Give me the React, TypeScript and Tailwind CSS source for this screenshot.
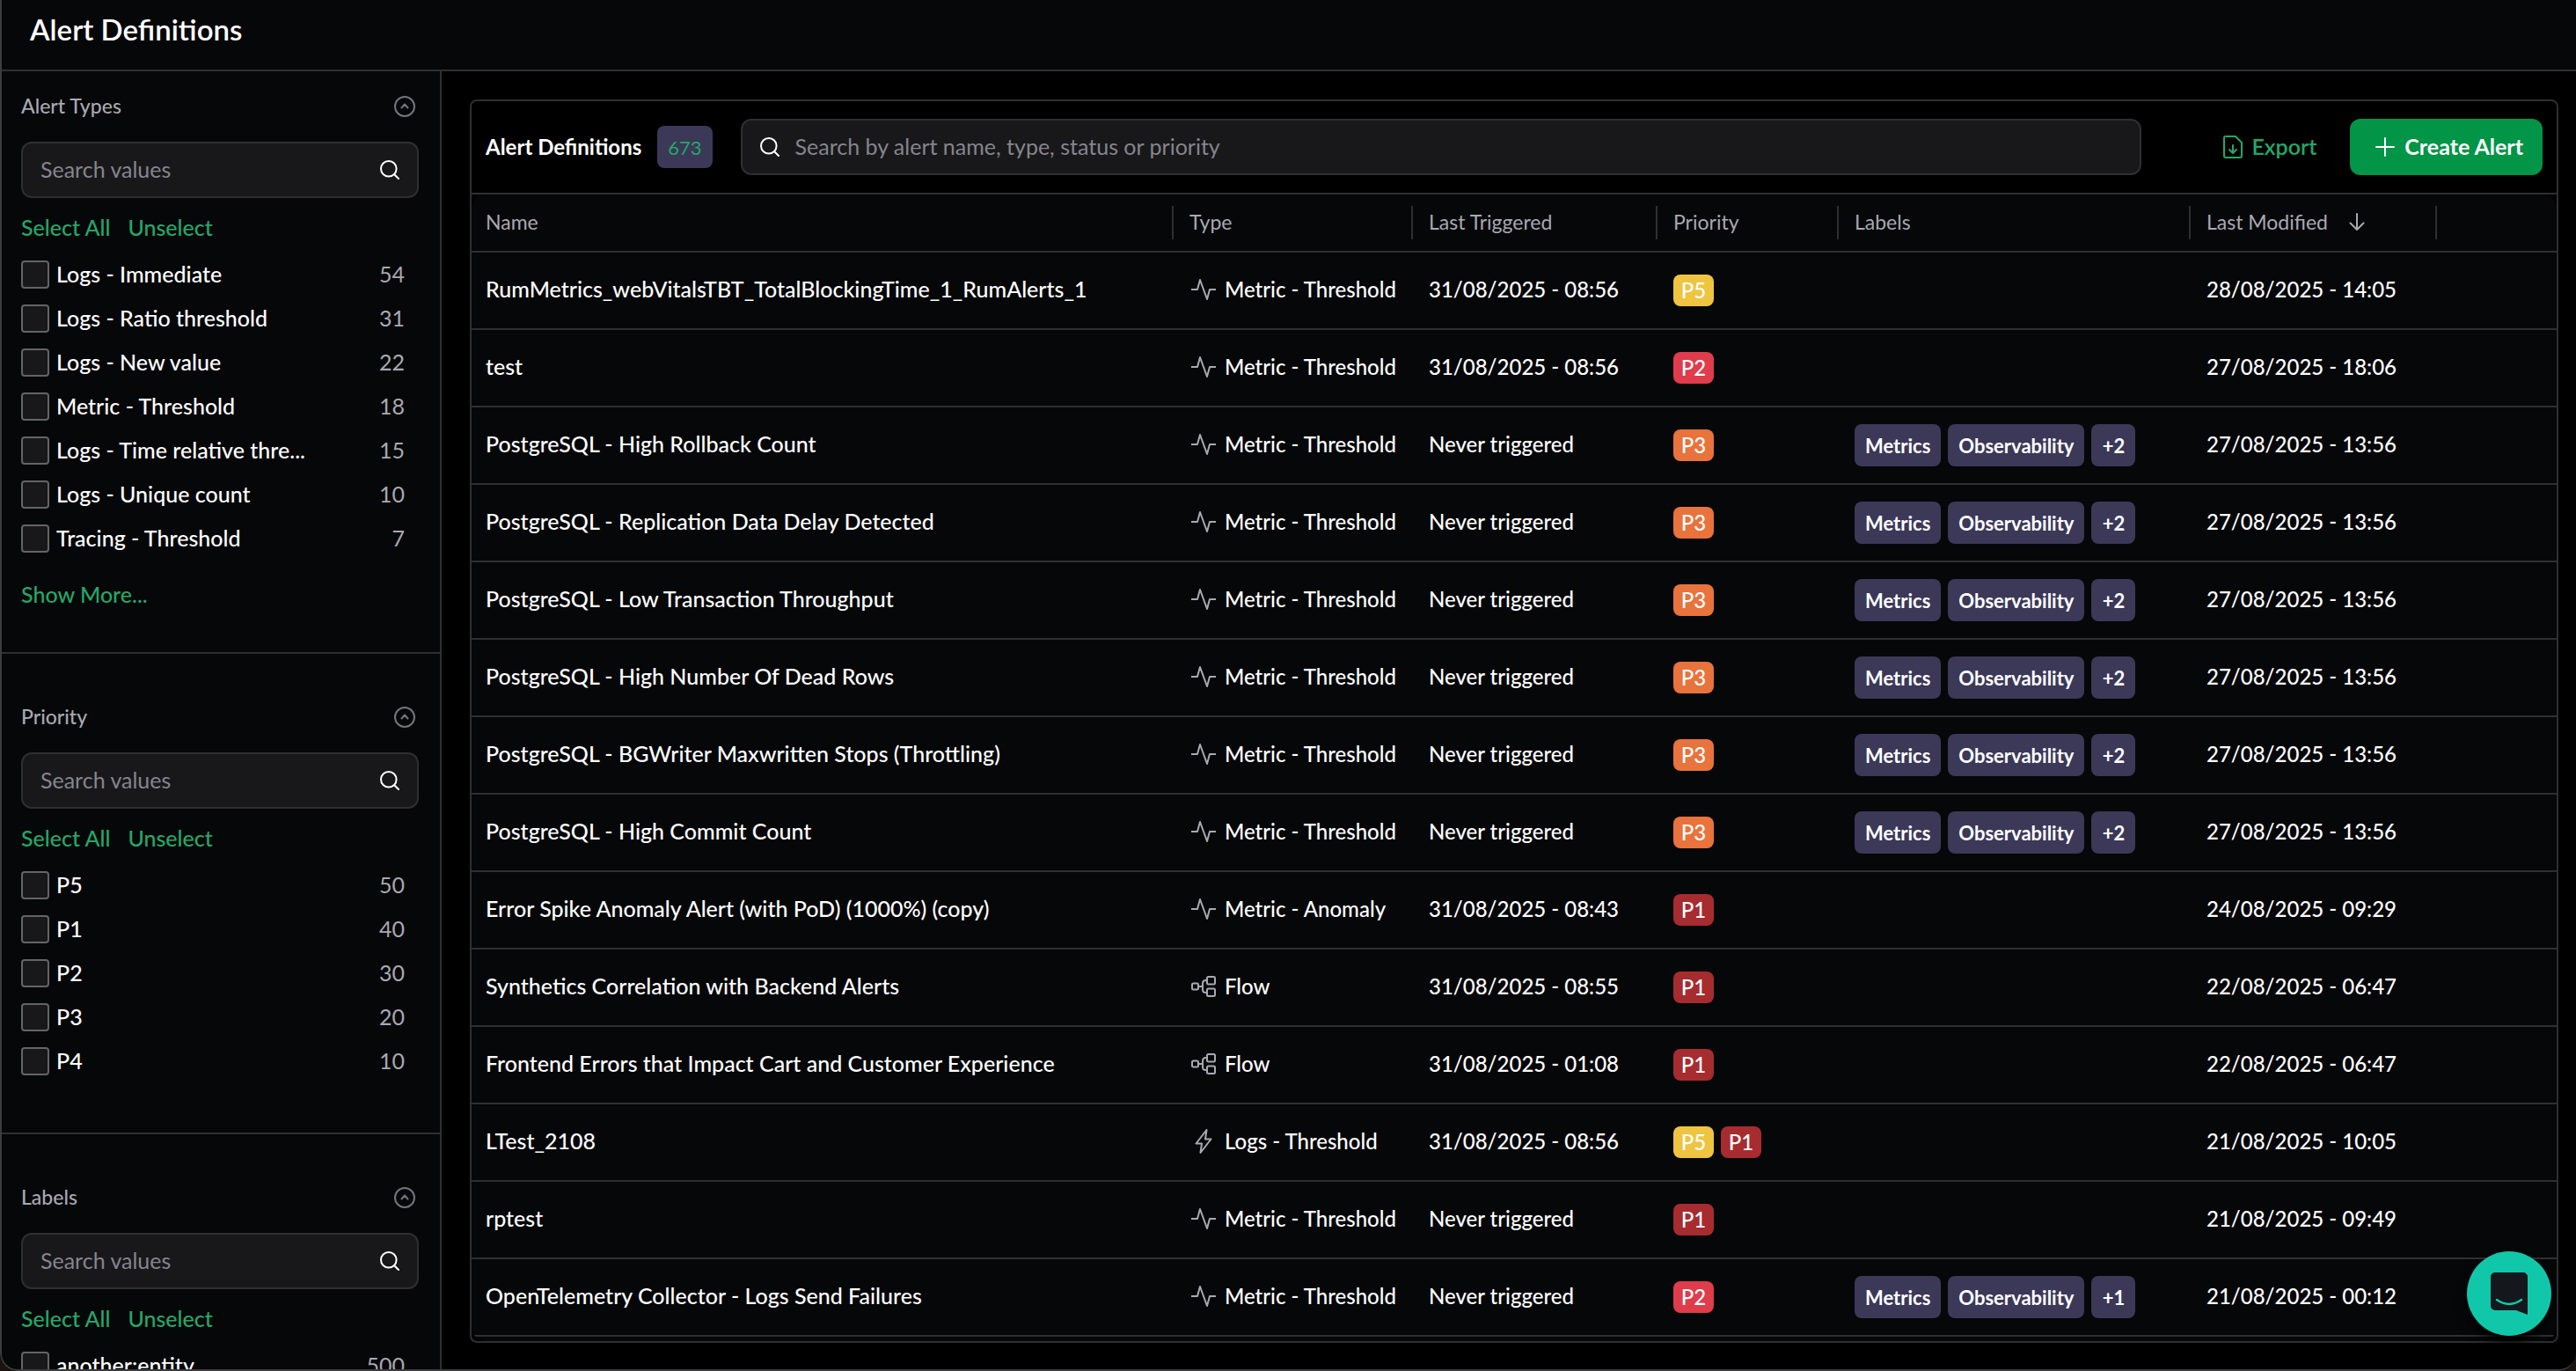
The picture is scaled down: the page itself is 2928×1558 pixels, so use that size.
import clsx from "clsx";
import { useState } from "react";

type AlertType = "metric" | "flow" | "logs";
type Priority = "P1" | "P2" | "P3" | "P4" | "P5";

interface AlertRow {
  name: string;
  icon: AlertType;
  type: string;
  lastTriggered: string;
  priorities: Priority[];
  labels?: string[];
  lastModified: string;
}

interface FilterOption {
  label: string;
  count: number;
}

const METRIC = "Metric - Threshold";
const NEVER = "Never triggered";

const alerts: AlertRow[] = [
  {
    name: "RumMetrics_webVitalsTBT_TotalBlockingTime_1_RumAlerts_1",
    icon: "metric",
    type: METRIC,
    lastTriggered: "31/08/2025 - 08:56",
    priorities: ["P5"],
    lastModified: "28/08/2025 - 14:05",
  },
  {
    name: "test",
    icon: "metric",
    type: METRIC,
    lastTriggered: "31/08/2025 - 08:56",
    priorities: ["P2"],
    lastModified: "27/08/2025 - 18:06",
  },
  ...[
    "PostgreSQL - High Rollback Count",
    "PostgreSQL - Replication Data Delay Detected",
    "PostgreSQL - Low Transaction Throughput",
    "PostgreSQL - High Number Of Dead Rows",
    "PostgreSQL - BGWriter Maxwritten Stops (Throttling)",
    "PostgreSQL - High Commit Count",
  ].map(
    (name): AlertRow => ({
      name,
      icon: "metric",
      type: METRIC,
      lastTriggered: NEVER,
      priorities: ["P3"],
      labels: ["Metrics", "Observability", "+2"],
      lastModified: "27/08/2025 - 13:56",
    })
  ),
  {
    name: "Error Spike Anomaly Alert (with PoD) (1000%) (copy)",
    icon: "metric",
    type: "Metric - Anomaly",
    lastTriggered: "31/08/2025 - 08:43",
    priorities: ["P1"],
    lastModified: "24/08/2025 - 09:29",
  },
  {
    name: "Synthetics Correlation with Backend Alerts",
    icon: "flow",
    type: "Flow",
    lastTriggered: "31/08/2025 - 08:55",
    priorities: ["P1"],
    lastModified: "22/08/2025 - 06:47",
  },
  {
    name: "Frontend Errors that Impact Cart and Customer Experience",
    icon: "flow",
    type: "Flow",
    lastTriggered: "31/08/2025 - 01:08",
    priorities: ["P1"],
    lastModified: "22/08/2025 - 06:47",
  },
  {
    name: "LTest_2108",
    icon: "logs",
    type: "Logs - Threshold",
    lastTriggered: "31/08/2025 - 08:56",
    priorities: ["P5", "P1"],
    lastModified: "21/08/2025 - 10:05",
  },
  {
    name: "rptest",
    icon: "metric",
    type: METRIC,
    lastTriggered: NEVER,
    priorities: ["P1"],
    lastModified: "21/08/2025 - 09:49",
  },
  {
    name: "OpenTelemetry Collector - Logs Send Failures",
    icon: "metric",
    type: METRIC,
    lastTriggered: NEVER,
    priorities: ["P2"],
    labels: ["Metrics", "Observability", "+1"],
    lastModified: "21/08/2025 - 00:12",
  },
];

const alertTypes: FilterOption[] = [
  { label: "Logs - Immediate", count: 54 },
  { label: "Logs - Ratio threshold", count: 31 },
  { label: "Logs - New value", count: 22 },
  { label: "Metric - Threshold", count: 18 },
  { label: "Logs - Time relative thre...", count: 15 },
  { label: "Logs - Unique count", count: 10 },
  { label: "Tracing - Threshold", count: 7 },
];

const priorities: FilterOption[] = [
  { label: "P5", count: 50 },
  { label: "P1", count: 40 },
  { label: "P2", count: 30 },
  { label: "P3", count: 20 },
  { label: "P4", count: 10 },
];

const labels: FilterOption[] = [{ label: "another:entity", count: 500 }];

const priorityColors: Record<Priority, string> = {
  P1: "bg-[#a62c30]",
  P2: "bg-[#df3c4c]",
  P3: "bg-[#e8733c]",
  P4: "bg-[#3c7ce8]",
  P5: "bg-[#eec441]",
};

function SearchIcon() {
  return (
    <svg
      width="22"
      height="22"
      viewBox="0 0 22 22"
      fill="none"
      stroke="white"
      strokeWidth="2"
      strokeLinecap="round"
      className="shrink-0"
    >
      <circle cx="9.8" cy="9.8" r="8.8" />
      <path d="M16.2 16.2 21 21" />
    </svg>
  );
}

function TypeIcon({ icon }: { icon: AlertType }) {
  return (
    <svg
      width="28"
      height="28"
      viewBox="0 0 28 28"
      fill="none"
      stroke="#a9a9b1"
      strokeWidth="2"
      strokeLinejoin="round"
      className="shrink-0"
    >
      {icon === "metric" && <path d="M0 14h7l3-11 8 22 3-11h7" />}
      {icon === "flow" && (
        <>
          <rect x="1" y="10.5" width="7" height="7" rx="1.5" />
          <rect x="18" y="3" width="9" height="8.5" rx="1.5" />
          <rect x="18" y="16.5" width="9" height="8.5" rx="1.5" />
          <path d="M8 14h5M18 7h-1.5C14.500 7 13 8.500 13 10.500v7c0 2 1.500 3.500 3.500 3.500H18" />
        </>
      )}
      {icon === "logs" && (
        <path d="M17.500 1 5.500 16.500h6.500L10.500 27 22.500 11.500H16z" />
      )}
    </svg>
  );
}

function FilterSection({
  title,
  options,
  showMore,
  className,
}: {
  title: string;
  options: FilterOption[];
  showMore?: boolean;
  className?: string;
}) {
  const [selected, setSelected] = useState<string[]>([]);

  return (
    <section
      className={clsx("shrink-0 border-b-2 border-[#2f2f31] px-6", className)}
    >
      <div className="flex h-8 items-center justify-between pr-1">
        <h2 className="pb-0.5 text-[23px] font-medium text-[#a9a9b1]">
          {title}
        </h2>
        <button type="button" aria-label={`Collapse ${title}`}>
          <svg
            width="24"
            height="24"
            viewBox="0 0 24 24"
            fill="none"
            stroke="#74747d"
            strokeWidth="2"
            strokeLinecap="round"
            strokeLinejoin="round"
          >
            <circle cx="12" cy="12" r="11" />
            <path d="m8.500 13.500 3.500-4 3.500 4" />
          </svg>
        </button>
      </div>
      <div className="mt-6 flex h-16 items-center rounded-[12px] border-2 border-[#2f2f31] bg-[#18181a] px-5">
        <input
          type="text"
          aria-label={`Search ${title}`}
          placeholder="Search values"
          className="min-w-0 flex-1 bg-transparent text-[25px] outline-none placeholder:text-[#85858d]"
        />
        <SearchIcon />
      </div>
      <div className="mt-[18px] mb-3 flex h-8 items-center gap-5 text-[25px] font-medium text-[#25a768]">
        <button
          type="button"
          onClick={() => setSelected(options.map((option) => option.label))}
        >
          Select All
        </button>
        <button type="button" onClick={() => setSelected([])}>
          Unselect
        </button>
      </div>
      {options.map(({ label, count }) => (
        <label
          key={label}
          className="flex h-[50px] items-center pr-4 text-[25px]"
        >
          <input
            type="checkbox"
            checked={selected.includes(label)}
            onChange={() =>
              setSelected((current) =>
                current.includes(label)
                  ? current.filter((item) => item !== label)
                  : [...current, label]
              )
            }
            className="size-8 shrink-0 appearance-none rounded-[4px] border-2 border-[#646466] bg-[#18181a] checked:bg-[#25a768]"
          />
          <span className="ml-2 flex-1 truncate font-medium">{label}</span>
          <span className="text-[#a9a9b1]">{count}</span>
        </label>
      ))}
      {showMore && (
        <button
          type="button"
          className="mt-5 block h-8 text-[25px] font-medium text-[#25a768]"
        >
          Show More...
        </button>
      )}
    </section>
  );
}

function HeaderCell({ children }: { children?: React.ReactNode }) {
  return (
    <th className="group p-0">
      <div className="flex h-[38px] items-center border-r-2 border-[#2f2f31] pb-0.5 pl-[18px] group-first:pl-4">
        {children}
      </div>
    </th>
  );
}

function AlertsTable() {
  return (
    <table className="w-full table-fixed border-separate border-spacing-0 text-left">
      <colgroup>
        <col />
        <col className="w-[272px]" />
        <col className="w-[278px]" />
        <col className="w-[206px]" />
        <col className="w-[400px]" />
        <col className="w-[280px]" />
        <col className="w-[136px]" />
      </colgroup>
      <thead>
        <tr className="h-[66px] text-[23px] text-[#a9a9b1] [&_th]:border-b-2 [&_th]:border-[#2f2f31] [&_th]:font-normal">
          <HeaderCell>Name</HeaderCell>
          <HeaderCell>Type</HeaderCell>
          <HeaderCell>Last Triggered</HeaderCell>
          <HeaderCell>Priority</HeaderCell>
          <HeaderCell>Labels</HeaderCell>
          <HeaderCell>
            Last Modified
            <button type="button" aria-label="Sort" className="ml-6">
              <svg
                width="18"
                height="22"
                viewBox="0 0 18 22"
                fill="none"
                stroke="#a9a9b1"
                strokeWidth="2"
                strokeLinecap="round"
                strokeLinejoin="round"
              >
                <path d="M9 2v18M1.500 12.500 9 20l7.500-7.500" />
              </svg>
            </button>
          </HeaderCell>
          <th />
        </tr>
      </thead>
      <tbody>
        {alerts.map((alert) => (
          <tr
            key={alert.name}
            className="h-[88px] text-[24px] font-medium whitespace-nowrap [&_td]:border-b-2 [&_td]:border-[#2f2f31]"
          >
            <td className="truncate pb-0.5 pl-4 text-[25px]">{alert.name}</td>
            <td className="pb-0.5 pl-5">
              <div className="flex items-center gap-2.5">
                <TypeIcon icon={alert.icon} />
                {alert.type}
              </div>
            </td>
            <td className="pb-0.5 pl-[18px]">{alert.lastTriggered}</td>
            <td className="pl-[18px]">
              <div className="flex gap-2">
                {alert.priorities.map((priority) => (
                  <span
                    key={priority}
                    className={clsx(
                      "flex h-9 w-[46px] items-center justify-center rounded-lg",
                      priorityColors[priority]
                    )}
                  >
                    {priority}
                  </span>
                ))}
              </div>
            </td>
            <td className="pl-[18px]">
              <div className="flex gap-2">
                {alert.labels?.map((label) => (
                  <span
                    key={label}
                    className="flex h-12 min-w-[50px] items-center justify-center rounded-lg bg-[#3b3858] px-3 text-[22px] font-bold"
                  >
                    {label}
                  </span>
                ))}
              </div>
            </td>
            <td className="pb-0.5 pl-[18px]">{alert.lastModified}</td>
            <td />
          </tr>
        ))}
      </tbody>
    </table>
  );
}

export default function App() {
  return (
    <div className="h-screen bg-[#1a1310] font-['Lato',sans-serif] text-white">
      <div className="relative flex h-full flex-col overflow-hidden rounded-b-[20px] bg-black">
        <header className="flex h-[81px] shrink-0 items-center border-b-2 border-[#2f2f31] bg-[#060709] px-[34px] pb-3">
          <h1 className="text-[33px] font-semibold">Alert Definitions</h1>
        </header>

        <div className="flex min-h-0 flex-1">
          <aside className="flex w-[502px] shrink-0 flex-col overflow-hidden border-r-2 border-[#2f2f31] bg-[#060709]">
            <FilterSection
              title="Alert Types"
              options={alertTypes}
              showMore
              className="pt-6 pb-[52px]"
            />
            <FilterSection
              title="Priority"
              options={priorities}
              className="pt-14 pb-14"
            />
            <FilterSection title="Labels" options={labels} className="pt-14" />
          </aside>

          <main className="min-w-0 flex-1 pt-8 pr-5 pb-8 pl-8">
            <div className="flex h-full flex-col overflow-hidden rounded-lg border-2 border-[#2f2f31]">
              <div className="flex h-[106px] shrink-0 items-center border-b-2 border-[#2f2f31] px-4">
                <h2 className="text-[24px] font-bold">Alert Definitions</h2>
                <span className="ml-[18px] flex h-12 items-center rounded-lg bg-[#3b3858] px-3 text-[22px] text-[#25a768]">
                  673
                </span>
                <div className="ml-8 flex h-16 flex-1 items-center rounded-[12px] border-2 border-[#2f2f31] bg-[#18181a] px-5">
                  <SearchIcon />
                  <input
                    type="search"
                    aria-label="Search alerts"
                    placeholder="Search by alert name, type, status or priority"
                    className="ml-[18px] min-w-0 flex-1 bg-transparent text-[25px] outline-none placeholder:text-[#85858d]"
                  />
                </div>
                <button
                  type="button"
                  className="ml-[93px] flex items-center gap-2.5 text-[25px] font-semibold text-[#25a768]"
                >
                  <svg
                    width="22"
                    height="26"
                    viewBox="0 0 22 26"
                    fill="none"
                    stroke="currentColor"
                    strokeWidth="2"
                    strokeLinecap="round"
                    strokeLinejoin="round"
                  >
                    <path d="M14 1H3a2 2 0 0 0-2 2v20a2 2 0 0 0 2 2h16a2 2 0 0 0 2-2V8z" />
                    <path d="M11 11v8.500M7 16l4 4 4-4" />
                  </svg>
                  Export
                </button>
                <button
                  type="button"
                  className="ml-[38px] flex h-16 items-center gap-2.5 rounded-[12px] bg-[#029447] pr-[22px] pl-7 text-[25px] font-bold"
                >
                  <svg
                    width="24"
                    height="24"
                    viewBox="0 0 24 24"
                    stroke="white"
                    strokeWidth="2"
                    strokeLinecap="round"
                  >
                    <path d="M12 2v20M2 12h20" />
                  </svg>
                  Create Alert
                </button>
              </div>
              <div className="min-h-0 flex-1 overflow-hidden rounded-2xl bg-[#060709]">
                <AlertsTable />
              </div>
            </div>
          </main>
        </div>

        {/* window frame */}
        <div className="pointer-events-none absolute inset-0 rounded-b-[20px] border-b-2 border-l-2 border-[#3c3c3e]" />

        <button
          type="button"
          aria-label="Open chat"
          className="absolute right-7 bottom-10 flex size-24 items-center justify-center rounded-full bg-[#11c7aa] shadow-lg shadow-black"
        >
          <svg width="42" height="48" viewBox="0 0 42 48" fill="none">
            <path
              d="M5 0h32a5 5 0 0 1 5 5v43l-13-5H5a5 5 0 0 1-5-5V5a5 5 0 0 1 5-5z"
              fill="#14171c"
            />
            <path
              d="M7 31c8.500 6.500 19.500 6.500 28 0"
              stroke="#11c7aa"
              strokeWidth="2.500"
              strokeLinecap="round"
            />
          </svg>
        </button>
      </div>
    </div>
  );
}
